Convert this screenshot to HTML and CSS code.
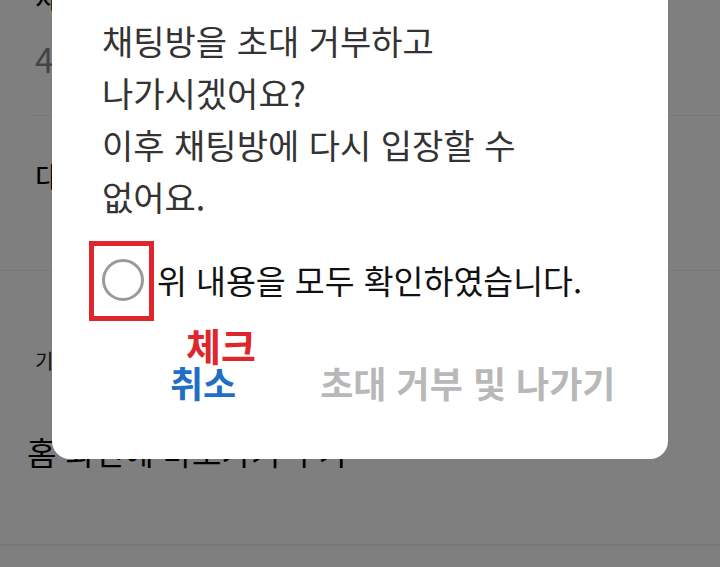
FILE: index.html
```html
<!DOCTYPE html>
<html lang="ko">
<head>
<meta charset="utf-8">
<title>채팅방 나가기</title>
<link rel="stylesheet" href="styles.css">
</head>
<body>
<div class="page">
  <div class="sec sec-top">
    <div class="bg-title">채팅방 설정</div>
    <div class="bg-count">4명</div>
  </div>
  <div class="sec sec-invite">
    <div class="bg-item">대화상대 초대</div>
  </div>
  <div class="sec sec-etc">
    <div class="bg-label">기타</div>
    <div class="bg-item bg-home">홈 화면에 바로가기 추가</div>
  </div>
</div>

<div class="overlay">
  <div class="dialog">
    <p class="msg">채팅방을 초대 거부하고<br>나가시겠어요?<br>이후 채팅방에 다시 입장할 수<br>없어요.</p>
    <div class="check-row">
      <span class="radio"></span>
      <span class="check-text">위 내용을 모두 확인하였습니다.</span>
      <span class="mark-box"></span>
    </div>
    <div class="btn-row">
      <span class="btn btn-cancel">취소</span>
      <span class="btn btn-leave">초대 거부 및 나가기</span>
      <span class="mark-label">체크</span>
    </div>
  </div>
</div>
</body>
</html>
```

FILE: styles.css
```css
* { box-sizing: border-box; }
html, body {
  margin: 0;
  padding: 0;
  width: 720px;
  height: 567px;
  overflow: hidden;
  background: #ffffff;
  font-family: "Noto Sans CJK KR", "Noto Sans", sans-serif;
}
.page {
  position: relative;
  width: 720px;
  height: 567px;
}
.sec {
  display: flow-root;
}
.sec-top {
  height: 116px;
  margin-left: 32px;
  padding-left: 3px;
  border-bottom: 1px solid #eeeeee;
}
.bg-title {
  font-size: 30px;
  line-height: 30px;
  height: 30px;
  margin-top: -19px;
  color: #000;
}
.bg-count {
  font-size: 34px;
  line-height: 40px;
  margin-top: 28px;
  color: #888;
}
.sec-invite {
  height: 155px;
  padding-left: 35px;
  padding-top: 39px;
  border-bottom: 1px solid #eeeeee;
}
.bg-item {
  font-size: 30px;
  line-height: 40px;
  color: #000;
}
.sec-etc {
  height: 275px;
  padding-left: 35px;
  padding-top: 78px;
  border-bottom: 2px solid #eeeeee;
}
.bg-label {
  font-size: 20px;
  line-height: 24px;
  color: #222;
}
.bg-home {
  font-size: 32px;
  margin-top: 58px;
  margin-left: -8px;
}

.overlay {
  position: absolute;
  inset: 0;
  background: rgba(0, 0, 0, 0.5);
}
.dialog {
  margin-left: 52px;
  margin-top: -30px;
  width: 616px;
  background: #ffffff;
  border-radius: 18px;
  padding: 45px 50px 51px 50px;
}
.msg {
  margin: 0;
  font-size: 34px;
  line-height: 52px;
  color: #333333;
}
.check-row {
  position: relative;
  display: flex;
  align-items: center;
  height: 60px;
  margin-top: 27px;
}
.radio {
  width: 42px;
  height: 42px;
  border: 3px solid #9a9a9a;
  border-radius: 50%;
  flex: none;
}
.check-text {
  margin-left: 13px;
  font-size: 32.5px;
  line-height: 52px;
  color: #111111;
}
.mark-box {
  position: absolute;
  left: -13px;
  top: -9px;
  width: 65px;
  height: 80px;
  border: 5px solid #e0262d;
}
.btn-row {
  position: relative;
  display: flex;
  align-items: center;
  height: 52px;
  margin-top: 46px;
  padding-left: 68px;
}
.btn {
  font-size: 36px;
  line-height: 52px;
  font-weight: 700;
}
.btn-cancel {
  color: #1f6fc5;
}
.btn-leave {
  margin-left: 84px;
  color: #b8b8b8;
}
.mark-label {
  position: absolute;
  left: 84px;
  top: -31px;
  font-size: 38px;
  line-height: 40px;
  font-weight: 700;
  color: #e0262d;
}
```
